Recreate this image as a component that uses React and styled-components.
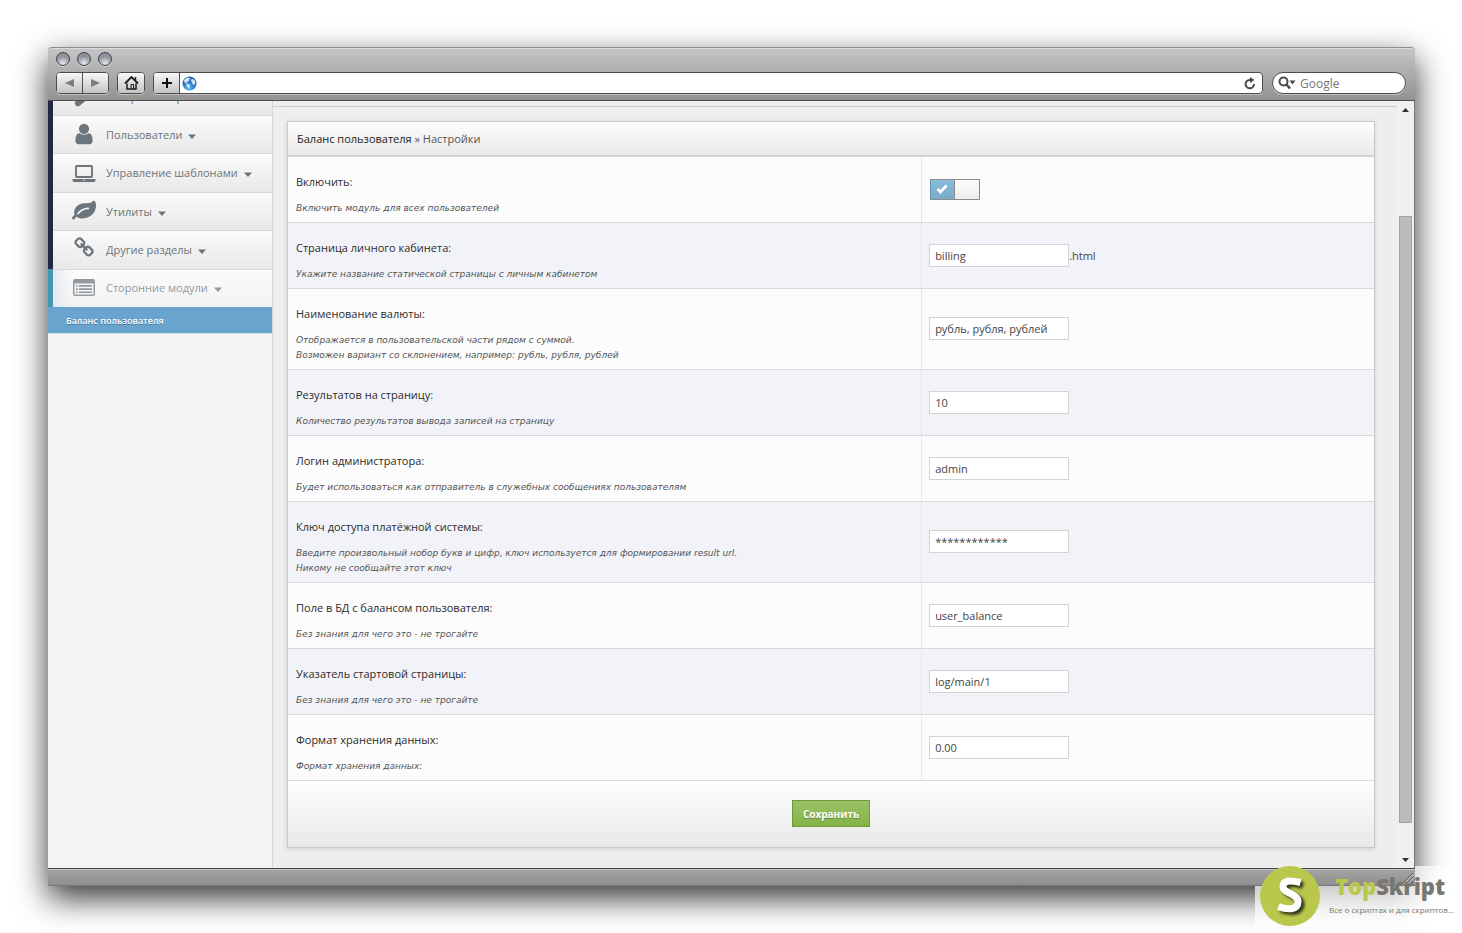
import React, { useState } from "react";
import styled, { createGlobalStyle, css } from "styled-components";

const GlobalStyle = createGlobalStyle`
  *, *::before, *::after { box-sizing: border-box; }
  body {
    margin: 0;
    background: #fff;
    color: #2b2b2b;
    font: 11px/15px "Open Sans", "Noto Sans", sans-serif;
  }
  button, input { font: inherit; }
`;

const Page = styled.div`
  position: relative;
  display: flex;
  min-height: 100vh;
  padding: 47px 47px 47px 48px;
`;

const Window = styled.div`
  display: flex;
  flex: 1;
  flex-direction: column;
  min-width: 0;
  border-radius: 4px 4px 0 0;
  box-shadow: 0 12px 32px rgba(0, 0, 0, 0.8);
`;

const Chrome = styled.header`
  display: flex;
  flex-direction: column;
  gap: 6px;
  height: 54px;
  padding: 4px 9px 6px 8px;
  border: 1px solid #8d8d8d;
  border-width: 1px 0;
  border-bottom-color: #4e4e4e;
  border-radius: 4px 4px 0 0;
  background: linear-gradient(#c6c6c6, #929292);
  box-shadow: inset 0 1px #dadada;
`;

const Lights = styled.div`
  display: flex;
  gap: 7px;
`;

const Light = styled.button`
  width: 14px;
  height: 14px;
  padding: 0;
  border: 1px solid #3f434b;
  border-radius: 50%;
  background: radial-gradient(circle at 50% 85%, #e8eaee 0, #a3a7ae 45%, #555a66 80%);
  box-shadow: 0 1px rgba(255, 255, 255, 0.5), inset 0 2px 2px rgba(255, 255, 255, 0.4);
`;

const Toolbar = styled.div`
  display: flex;
  gap: 8px;
  height: 22px;
`;

const Group = styled.div`
  display: flex;
  flex: ${(p) => (p.$grow ? 1 : "none")};
  overflow: hidden;
  border: 1px solid #4c4c4c;
  border-radius: 4px;
  background: #fff;
  box-shadow: 0 1px rgba(255, 255, 255, 0.4);
`;

const ToolButton = styled.button`
  display: grid;
  place-items: center;
  width: 26px;
  padding: 0;
  border: 0;
  background: linear-gradient(#f8f8f8, #c3c3c3);
  & + &, & + div { border-left: 1px solid #4c4c4c; }
  &:first-child:not(:last-child) { width: 25px; }
`;

const Address = styled.div`
  display: flex;
  flex: 1;
  align-items: center;
  padding: 0 6px 0 2px;
`;

const AddressInput = styled.input`
  flex: 1;
  min-width: 0;
  border: 0;
  outline: 0;
  background: none;
`;

const PlainButton = styled.button`
  display: grid;
  padding: 0;
  border: 0;
  background: none;
`;

const Search = styled.label`
  display: flex;
  align-items: center;
  gap: 4px;
  width: 134px;
  margin-left: 1px;
  padding: 0 6px 0 5px;
  border: 1px solid #4c4c4c;
  border-radius: 11px;
  background: #fff;
  box-shadow: 0 1px rgba(255, 255, 255, 0.4);
`;

const SearchInput = styled.input`
  width: 90px;
  padding: 0;
  border: 0;
  outline: 0;
  background: none;
  font-size: 12px;
  &::placeholder { color: #777; opacity: 1; }
`;

const Viewport = styled.div`
  display: flex;
  flex: 1;
  overflow: hidden;
  background: #eeeeee;
`;

const Sidebar = styled.aside`
  flex: none;
  width: 225px;
  border-right: 1px solid #d6d6d6;
  background: #f3f3f3;
`;

const Nav = styled.nav`
  display: flex;
  flex-direction: column;
  height: 192px;
`;

const NavItem = styled.button`
  display: flex;
  flex: 1 1 0;
  align-items: center;
  min-height: 0;
  width: 100%;
  padding: 0 0 0 19px;
  border: 0;
  border-left: 5px solid ${(p) => (p.$active ? "#4497ae" : "#1f2a44")};
  box-shadow: inset 0 1px #d9d9d9;
  background: ${(p) =>
    p.$active
      ? "linear-gradient(90deg, #e3e9f3, rgba(243, 243, 243, 0) 18px), linear-gradient(#fcfcfc, #f1f1f1)"
      : "linear-gradient(#fbfbfb, #e8e8e8)"};
  color: ${(p) => (p.$active ? "#949b9f" : "#6b757b")};
  text-align: left;
`;

const NavPeek = styled.div`
  display: flex;
  align-items: flex-end;
  height: 14px;
  overflow: hidden;
  ${NavItem} {
    flex: 1;
    height: 38px;
  }
`;

const NavIcon = styled.svg`
  flex: none;
  width: 24px;
  height: 24px;
  margin-right: 10px;
  fill: currentColor;
`;

const Caret = styled.svg`
  width: 8px;
  height: 5px;
  margin: 4px 0 0 6px;
  fill: currentColor;
`;

const SubItem = styled.a`
  display: block;
  height: 27px;
  padding: 6px 18px;
  border-bottom: 1px solid #d9e2e8;
  background: #68a4cd;
  color: #fff;
  font-size: 9px;
  font-weight: 600;
  text-decoration: none;
  text-shadow: 0 1px rgba(0, 0, 0, 0.3);
`;

const Content = styled.main`
  flex: 1;
  min-width: 0;
`;

const TopStrip = styled.div`
  height: 6px;
  border-bottom: 1px solid #cccccc;
`;

const Panel = styled.form`
  margin: 14px 22px 20px 14px;
  border: 1px solid #c9c9c9;
  background: #fcfcfc;
  box-shadow: 0 1px 5px rgba(0, 0, 0, 0.12);
`;

const PanelHeader = styled.h1`
  height: 35px;
  margin: 0;
  padding: 9px;
  border-bottom: 2px solid #d2d2d2;
  background: linear-gradient(#fdfdfd, #e9e9e9);
  color: #555;
  font-size: 11px;
  font-weight: 400;
  a { color: #222; text-decoration: none; }
`;

const Table = styled.table`
  width: 100%;
  border-collapse: separate;
  border-spacing: 0;
  table-layout: fixed;
`;

const Row = styled.tr`
  &:nth-child(even) { background: #f2f3f8; }
`;

const cell = css`
  border-bottom: 1px solid #d9d9dc;
  text-align: left;
  font-weight: 400;
`;

const NameCell = styled.th`
  ${cell}
  width: 58.3%;
  padding: 17px 8px 6px;
`;

const FieldCell = styled.td`
  ${cell}
  padding: 0 7px 1px;
  border-left: 1px solid #e6e6ea;
  color: #444;
  vertical-align: middle;
`;

const Name = styled.label`
  display: block;
`;

const Hint = styled.p`
  margin: 12px 0 0;
  color: #555;
  font: italic 9px/15px "DejaVu Sans", sans-serif;
  white-space: pre-line;
`;

const TextInput = styled.input`
  width: 140px;
  height: 23px;
  padding: 0 5px;
  border: 1px solid #d3d3d3;
  outline: 0;
  background: #fff;
  color: #444;
  vertical-align: middle;
`;

const Suffix = styled.span`
  vertical-align: middle;
`;

const Toggle = styled.span`
  position: relative;
  display: inline-flex;
  width: 50px;
  height: 21px;
  margin-left: 1px;
  border: 1px solid #8c8c8c;
  border-left-color: #5f93b5;
  border-radius: 1px;
  background: linear-gradient(#8abbd9, #78abcb);
  vertical-align: middle;
  input {
    position: absolute;
    inset: 0;
    width: 100%;
    height: 100%;
    margin: 0;
    opacity: 0;
  }
`;

const ToggleMark = styled.svg`
  width: 12px;
  height: 10px;
  margin: 4px 6px 0 5px;
  visibility: ${(p) => (p.$on ? "visible" : "hidden")};
`;

const Knob = styled.span`
  flex: 1;
  border-left: 1px solid #8c8c8c;
  background: linear-gradient(#fdfdfd, #ececec);
`;

const Actions = styled.div`
  display: flex;
  justify-content: center;
  padding: 19px 0 20px;
  background: linear-gradient(#fefefe, #e8e8e8);
`;

const SaveButton = styled.button`
  height: 27px;
  padding: 1px 10px 0;
  border: 1px solid #6f9a37;
  background: linear-gradient(#98c266, #84b347);
  color: #fff;
  font-size: 10px;
  font-weight: 700;
  text-shadow: 0 1px rgba(0, 0, 0, 0.3);
`;

const Scrollbar = styled.div`
  display: flex;
  flex: none;
  flex-direction: column;
  align-items: center;
  width: 18px;
  padding: 7px 1px 6px 0;
  border-right: 1px solid #777;
  background: #f0f0f0;
`;

const Track = styled.div`
  display: flex;
  flex: 1;
  padding: 104px 0 35px;
`;

const Thumb = styled.div`
  width: 13px;
  border: 1px solid #a4a4a4;
  background: #bbbbbb;
`;

const StatusBar = styled.footer`
  display: flex;
  justify-content: flex-end;
  height: 18px;
  padding: 3px 1px 0 0;
  border: 1px solid #444;
  border-width: 1px 0;
  border-bottom-color: #777;
  background: linear-gradient(#a4a4a4, #8f8f8f);
  box-shadow: inset 0 1px #c9c9c9;
`;

const Watermark = styled.div`
  position: absolute;
  right: 0;
  bottom: 7px;
  display: flex;
  gap: 9px;
  width: 207px;
  height: 60px;
  padding-left: 5px;
`;

const Veil = styled.div`
  position: absolute;
  right: 0;
  bottom: 7px;
  width: 207px;
  height: 60px;
  background: rgba(255, 255, 255, 0.7);
  clip-path: polygon(160px 0, 100% 0, 100% 100%, 0 100%, 0 20px, 160px 20px);
`;

const Badge = styled.svg`
  flex: none;
  width: 60px;
  height: 60px;
`;

const Brand = styled.div`
  padding-top: 6px;
  white-space: nowrap;
`;

const BrandName = styled.div`
  padding-left: 6px;
  color: #77776f;
  font-size: 22px;
  font-weight: 800;
  line-height: 28px;
  em { color: #b9c84b; font-style: normal; }
`;

const Tagline = styled.div`
  color: #77776f;
  font-size: 8px;
  line-height: 20px;
`;

const icons = {
  wrench: {
    box: "-2 0 24 24",
    d: "M2 17l11-9a6 6 0 0 1 8-7l-4 4 1 3 3 1 3-3a6 6 0 0 1-8 7L6 21.500a3 3 0 0 1-4-4.500z",
  },
  user: {
    box: "0 0 1792 1792",
    d: "M1536 1399q0 109-62.5 187t-150.5 78h-854q-88 0-150.5-78t-62.5-187q0-85 8.5-160.5t31.5-152 58.5-131 94-89 134.5-34.5q131 128 313 128t313-128q76 0 134.5 34.5t94 89 58.5 131 31.5 152 8.5 160.5zm-256-887q0 159-112.5 271.5t-271.5 112.5-271.5-112.5-112.5-271.5 112.5-271.5 271.5-112.5 271.5 112.5 112.5 271.5z",
  },
  laptop: {
    box: "0 0 24 24",
    d: "M5 4h14a2 2 0 0 1 2 2v9a2 2 0 0 1-2 2H5a2 2 0 0 1-2-2V6a2 2 0 0 1 2-2zm.5 2a.6.6 0 0 0-.6.6v7.800a.6.6 0 0 0 .6.6h13a.6.6 0 0 0 .6-.6V6.600a.6.6 0 0 0-.6-.6zM.5 18h23v1.200c0 .8-.9 1.800-1.800 1.800H2.300c-.9 0-1.800-1-1.800-1.800zm10.300.8v.6h2.400v-.6z",
  },
  leaf: {
    box: "0 0 1792 1792",
    d: "M1280 704q0-26-19-45t-45-19q-172 0-318 49.5t-259.5 134-235.5 219.5q-19 21-19 45 0 26 19 45t45 19q24 0 45-19 27-24 74-71t67-66q137-124 268.5-176t313.5-52q26 0 45-19t19-45zm512-198q0 95-20 193-46 224-184.5 383t-357.5 268q-214 108-438 108-148 0-286-47-15-5-88-42t-96-37q-16 0-39.5 32t-45 70-52.5 70-60 32q-43 0-63.5-17.5t-45.5-59.5q-2-4-6-11t-5.5-10-3-9.5-1.5-13.5q0-35 31-73.5t68-65.5 68-56 31-48q0-4-14-38t-16-44q-9-51-9-104 0-115 43.5-220t119-184.5 170.5-139 204-95.5q55-18 145-25.5t179.5-9 178.5-6 163.5-24 113.5-56.5l29.5-29.5 29.5-28 27-20 36.5-16 43.5-4.5q39 0 70.5 46t47.5 112 24 124 8 96z",
  },
  link: {
    box: "-120 0 2020 2020",
    d: "M1520 1216q0-40-28-68l-208-208q-28-28-68-28-42 0-72 32 3 3 19 18.5t21.5 21.5 15 19 13 25.5 3.5 27.5q0 40-28 68t-68 28q-15 0-27.5-3.5t-25.5-13-19-15-21.5-21.5-18.5-19q-33 31-33 73 0 40 28 68l206 207q27 27 68 27 40 0 68-26l147-146q28-28 28-67zm-703-705q0-40-28-68l-206-207q-28-28-68-28-39 0-68 27l-147 146q-28 28-28 67 0 40 28 68l208 208q27 27 68 27 42 0 72-31-3-3-19-18.5t-21.5-21.5-15-19-13-25.5-3.5-27.5q0-40 28-68t68-28q15 0 27.5 3.5t25.5 13 19 15 21.5 21.500 18.5 19q33-31 33-73zm895 705q0 120-85 203l-147 146q-83 83-203 83-121 0-204-85l-206-207q-83-83-83-203 0-123 88-209l-88-88q-86 88-208 88-120 0-204-84l-208-208q-84-84-84-204t85-203l147-146q83-83 203-83 121 0 204 85l206 207q83 83 83 203 0 123-88 209l88 88q86-88 208-88 120 0 204 84l208 208q84 84 84 204z",
  },
  list: {
    box: "0 0 24 24",
    d: "M3 3h18a2 2 0 0 1 2 2v13a2 2 0 0 1-2 2H3a2 2 0 0 1-2-2V5a2 2 0 0 1 2-2zM2.500 7.500V18a.6.6 0 0 0 .6.6h17.800a.6.6 0 0 0 .6-.6V7.500zM4 9h1.700v1.700H4zm3 0h13v1.700H7zM4 12.200h1.700v1.700H4zm3 0h13v1.700H7zM4 15.400h1.700v1.700H4zm3 0h13v1.700H7z",
  },
};

const sections = [
  { icon: "user", title: "Пользователи" },
  { icon: "laptop", title: "Управление шаблонами" },
  { icon: "leaf", title: "Утилиты" },
  { icon: "link", title: "Другие разделы" },
  { icon: "list", title: "Сторонние модули", active: true },
];

const settings = [
  { id: "enable", name: "Включить:", hint: "Включить модуль для всех пользователей", toggle: true },
  { id: "page", name: "Страница личного кабинета:", hint: "Укажите название статической страницы с личным кабинетом", value: "billing", suffix: ".html" },
  { id: "currency", name: "Наименование валюты:", hint: "Отображается в пользовательской части рядом с суммой.\nВозможен вариант со склонением, например: рубль, рубля, рублей", value: "рубль, рубля, рублей" },
  { id: "paging", name: "Результатов на страницу:", hint: "Количество результатов вывода записей на страницу", value: "10" },
  { id: "admin", name: "Логин администратора:", hint: "Будет использоваться как отправитель в служебных сообщениях пользователям", value: "admin" },
  { id: "secret", name: "Ключ доступа платёжной системы:", hint: "Введите произвольный нобор букв и цифр, ключ используется для формировании result url.\nНикому не сообщайте этот ключ", value: "************" },
  { id: "field", name: "Поле в БД с балансом пользователя:", hint: "Без знания для чего это - не трогайте", value: "user_balance" },
  { id: "start", name: "Указатель стартовой страницы:", hint: "Без знания для чего это - не трогайте", value: "log/main/1" },
  { id: "format", name: "Формат хранения данных:", hint: "Формат хранения данных:", value: "0.00" },
];

function NavEntry({ icon, title, active }) {
  return (
    <NavItem type="button" $active={active}>
      <NavIcon viewBox={icons[icon].box} aria-hidden="true">
        <path fillRule="evenodd" d={icons[icon].d} />
      </NavIcon>
      {title}
      <Caret viewBox="0 0 8 5" aria-hidden="true">
        <path d="M0 .5h8L4 5z" />
      </Caret>
    </NavItem>
  );
}

function Switch({ id }) {
  const [on, setOn] = useState(true);
  return (
    <Toggle>
      <ToggleMark viewBox="0 0 12 10" $on={on} aria-hidden="true">
        <path d="M1.500 5l3 3L10.500 1.500" fill="none" stroke="#fff" strokeWidth="2.800" />
      </ToggleMark>
      <Knob />
      <input id={id} type="checkbox" checked={on} onChange={(e) => setOn(e.target.checked)} />
    </Toggle>
  );
}

function BrowserChrome() {
  return (
    <Chrome>
      <Lights>
        <Light type="button" aria-label="Закрыть" />
        <Light type="button" aria-label="Свернуть" />
        <Light type="button" aria-label="Развернуть" />
      </Lights>
      <Toolbar>
        <Group>
          <ToolButton type="button" aria-label="Назад">
            <svg width="9" height="8"><path d="M9 0v8L0 4z" fill="#7d7d7d" /></svg>
          </ToolButton>
          <ToolButton type="button" aria-label="Вперёд">
            <svg width="9" height="8"><path d="M0 0v8l9-4z" fill="#7d7d7d" /></svg>
          </ToolButton>
        </Group>
        <Group>
          <ToolButton type="button" aria-label="Домой">
            <svg width="15" height="14" viewBox="0 0 15 14" fill="none" stroke="#1c1c1c">
              <path d="M1 7.500L7.500 1 14 7.500" strokeWidth="1.800" />
              <path d="M3 7.500v5.500h9V7.500M11.500 4V1" strokeWidth="1.500" />
              <path d="M7 13V8.500h2.500V13" />
            </svg>
          </ToolButton>
        </Group>
        <Group $grow>
          <ToolButton type="button" aria-label="Добавить">
            <svg width="10" height="10"><path d="M4 0h2v4h4v2H6v4H4V6H0V4h4z" fill="#111" /></svg>
          </ToolButton>
          <Address>
            <svg width="15" height="15" viewBox="0 0 15 15" aria-hidden="true">
              <defs>
                <radialGradient id="globe" cx="45%" cy="80%" r="75%">
                  <stop offset="0" stopColor="#5cc4f5" />
                  <stop offset=".6" stopColor="#2a72c8" />
                  <stop offset="1" stopColor="#2a5cae" />
                </radialGradient>
              </defs>
              <circle cx="7.500" cy="7.500" r="7" fill="url(#globe)" />
              <path d="M2 4l3-2.500 3 .5-1 3-2.500 1 .5 1.500 3 1.500-1 3.500-2-2-.5-3-2-1zM9.500 3l2.500.5 1.500 2.500-1 3-2-1-.5-2-1-1z" fill="#e4f1fa" opacity=".9" />
            </svg>
            <AddressInput aria-label="Адрес" defaultValue="" />
            <PlainButton type="button" aria-label="Обновить">
              <svg width="12" height="13" viewBox="0 0 12 13">
                <path d="M10 7A4.200 4.200 0 1 1 6.500 3" fill="none" stroke="#4a4a4a" strokeWidth="2" />
                <path d="M6 0l4.500 3L6 6z" fill="#4a4a4a" />
              </svg>
            </PlainButton>
          </Address>
        </Group>
        <Search>
          <svg width="18" height="14" viewBox="0 0 18 14" aria-hidden="true">
            <circle cx="5.500" cy="5.500" r="4" fill="none" stroke="#4a4a4a" strokeWidth="2" />
            <path d="M8 8l4 4.500" stroke="#4a4a4a" strokeWidth="2.500" />
            <path d="M11.500 4.500h6l-3 4z" fill="#4a4a4a" />
          </svg>
          <SearchInput aria-label="Поиск" placeholder="Google" />
        </Search>
      </Toolbar>
    </Chrome>
  );
}

export default function App() {
  return (
    <Page>
      <GlobalStyle />
      <Window>
        <BrowserChrome />
        <Viewport>
          <Sidebar>
            <NavPeek>
              <NavEntry icon="wrench" title="Настройка скрипта" />
            </NavPeek>
            <Nav>
              {sections.map((s) => (
                <NavEntry key={s.icon} {...s} />
              ))}
            </Nav>
            <SubItem href="#balance">Баланс пользователя</SubItem>
          </Sidebar>
          <Content>
            <TopStrip />
            <Panel onSubmit={(e) => e.preventDefault()}>
              <PanelHeader>
                <a href="#balance">Баланс пользователя</a> » Настройки
              </PanelHeader>
              <Table>
                <tbody>
                  {settings.map((s) => (
                    <Row key={s.id}>
                      <NameCell scope="row">
                        <Name htmlFor={s.id}>{s.name}</Name>
                        <Hint>{s.hint}</Hint>
                      </NameCell>
                      <FieldCell>
                        {s.toggle ? <Switch id={s.id} /> : <TextInput id={s.id} defaultValue={s.value} />}
                        {s.suffix && <Suffix>{s.suffix}</Suffix>}
                      </FieldCell>
                    </Row>
                  ))}
                </tbody>
              </Table>
              <Actions>
                <SaveButton type="submit">Сохранить</SaveButton>
              </Actions>
            </Panel>
          </Content>
          <Scrollbar aria-hidden="true">
            <svg width="7" height="4"><path d="M0 4l3.500-4L7 4z" fill="#333" /></svg>
            <Track><Thumb /></Track>
            <svg width="7" height="4"><path d="M0 0h7L3.500 4z" fill="#333" /></svg>
          </Scrollbar>
        </Viewport>
        <StatusBar>
          <svg width="12" height="12" viewBox="0 0 12 12" aria-hidden="true">
            <path d="M0 12L11 1M4 12l7-7M8 12l3-3" stroke="#555" />
            <path d="M1 12.500L11.500 2M5 12.500L11.500 6" stroke="#ccc" />
          </svg>
        </StatusBar>
      </Window>
      <Veil />
      <Watermark>
        <Badge viewBox="0 0 60 60" aria-hidden="true">
          <defs>
            <filter id="soft" x="-30%" y="-30%" width="160%" height="160%">
              <feGaussianBlur stdDeviation="1.500" />
            </filter>
          </defs>
          <circle cx="30" cy="30" r="30" fill="#b9c84b" />
          <g fill="none" strokeWidth="7">
            <path d="M43 19.500Q26 14 26 23c0 7 15 7 15 15 0 9-11 9-20 5" stroke="#2c3112" filter="url(#soft)" />
            <path d="M40.500 16.500Q23 12 23 20.500c0 7 15 7 15 15 0 9-11 8.500-19.500 5" stroke="#fff" />
          </g>
        </Badge>
        <Brand>
          <BrandName><em>Top</em>Skript</BrandName>
          <Tagline>Все о скриптах и для скриптов...</Tagline>
        </Brand>
      </Watermark>
    </Page>
  );
}
